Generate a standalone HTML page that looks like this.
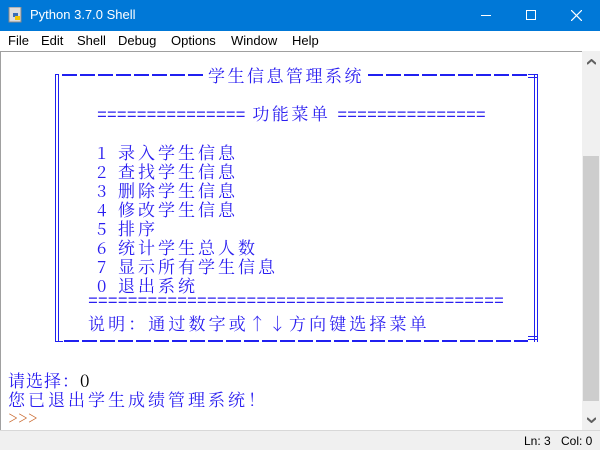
<!DOCTYPE html>
<html><head><meta charset="utf-8"><style>
*{margin:0;padding:0;box-sizing:border-box}
body{width:600px;height:450px;position:relative;background:#fff;overflow:hidden;font-family:"Liberation Sans","Noto Sans CJK SC",sans-serif}
.tb{position:absolute;left:0;top:0;width:600px;height:31px;background:#0078d7;color:#fff;font-size:13px}
.mb{position:absolute;left:0;top:31px;width:600px;height:20px;background:#fff;font-size:13px;color:#000}
.mb span{position:absolute;top:2px}
.ta{position:absolute;left:0;top:51px;width:582px;height:379px;border-top:1px solid #a0a0a0;border-left:1px solid #a0a0a0}
.sb{position:absolute;left:582px;top:51px;width:18px;height:379px;background:#f0f0f0}
.st{position:absolute;left:0;top:430px;width:600px;height:20px;background:#f0f0f0;border-top:1px solid #d8d8d8;font-size:12px}
.t{position:absolute;font-family:"Noto Serif CJK SC","Liberation Serif",serif;font-size:17px;color:#2a1ef0;white-space:pre;line-height:19px;letter-spacing:2.5px}
.m{font-family:'Liberation Mono',monospace;font-size:16.5px;letter-spacing:0}
.h{position:absolute;height:2px;background:repeating-linear-gradient(90deg,#2020f0 0 15px,transparent 15px 18px)}
.v{position:absolute;width:4px;border-left:1px solid #2020f0;border-right:1px solid #2020f0}
.n{display:inline-block;width:21px}
</style></head><body>
<div class="tb">
<svg style="position:absolute;left:8px;top:7px" width="16" height="16"><rect x="1" y="0" width="12" height="15" fill="#ddd" stroke="#888"/><path d="M5 6h5v4H5z" fill="#3c6eb4"/><path d="M7 9h5v4H7z" fill="#f5c400"/></svg>
<span style="position:absolute;left:30px;top:7px">Python 3.7.0 Shell</span>
<div style="position:absolute;left:481px;top:15px;width:10px;height:1px;background:#fff"></div>
<div style="position:absolute;left:526px;top:10px;width:10px;height:10px;border:1px solid #fff"></div>
<svg style="position:absolute;left:571px;top:10px" width="11" height="11"><path d="M0 0L11 11M11 0L0 11" stroke="#fff" stroke-width="1.2"/></svg>
</div>
<div class="mb"><span style="left:8px">File</span><span style="left:41px">Edit</span><span style="left:77px">Shell</span><span style="left:118px">Debug</span><span style="left:171px">Options</span><span style="left:231px">Window</span><span style="left:292px">Help</span></div>
<div class="ta"></div>
<div class="sb">
<svg style="position:absolute;left:5px;top:8px" width="9" height="6"><path d="M0 5L4.5 1L9 5" stroke="#606060" stroke-width="2" fill="none"/></svg>
<div style="position:absolute;left:1px;top:105px;width:16px;height:245px;background:#cdcdcd"></div>
<svg style="position:absolute;left:5px;top:366px" width="9" height="6"><path d="M0 1L4.5 5L9 1" stroke="#606060" stroke-width="2" fill="none"/></svg>
</div>
<div class="st"><span style="position:absolute;left:524px;top:3px">Ln: 3</span><span style="position:absolute;left:561px;top:3px">Col: 0</span></div>

<div class="h" style="left:62px;top:74px;width:144px"></div>
<div class="h" style="left:368px;top:74px;width:160px"></div>
<div class="v" style="left:55px;top:74px;height:268px;border-top:1px solid #2020f0"></div>
<div class="v" style="left:534px;top:74px;height:268px"></div>
<div style="position:absolute;left:528px;top:74px;width:10px;height:4px;border-top:1px solid #2020f0;border-bottom:1px solid #2020f0"></div>
<div style="position:absolute;left:55px;top:338px;width:8px;height:4px;border-bottom:1px solid #2020f0"></div>
<div class="h" style="left:64px;top:340px;width:464px"></div>
<div style="position:absolute;left:528px;top:336px;width:10px;height:4px;border-top:1px solid #2020f0;border-bottom:1px solid #2020f0"></div>
<div class="t" style="left:208px;top:65px">学生信息管理系统</div>
<div class="t" style="left:97px;top:103px"><span class="m">===============</span> 功能菜单 <span class="m">===============</span></div>
<div class="t" style="left:97px;top:142px;letter-spacing:3px"><span class="n">1</span>录入学生信息
<span class="n">2</span>查找学生信息
<span class="n">3</span>删除学生信息
<span class="n">4</span>修改学生信息
<span class="n">5</span>排序
<span class="n">6</span>统计学生总人数
<span class="n">7</span>显示所有学生信息
<span class="n">0</span>退出系统</div>
<div class="t m" style="left:88px;top:292px">==========================================</div>
<div class="t" style="left:88px;top:313px;letter-spacing:3.1px">说明：通过数字或↑↓方向键选择菜单</div>
<div class="t" style="left:8px;top:370px;letter-spacing:1px">请选择：<span style="color:#000">0</span></div>
<div class="t" style="left:8px;top:389px;letter-spacing:3px">您已退出学生成绩管理系统！</div>
<div class="t" style="left:8px;top:407px;color:#c86428;letter-spacing:0">&gt;&gt;&gt;</div>
</body></html>
